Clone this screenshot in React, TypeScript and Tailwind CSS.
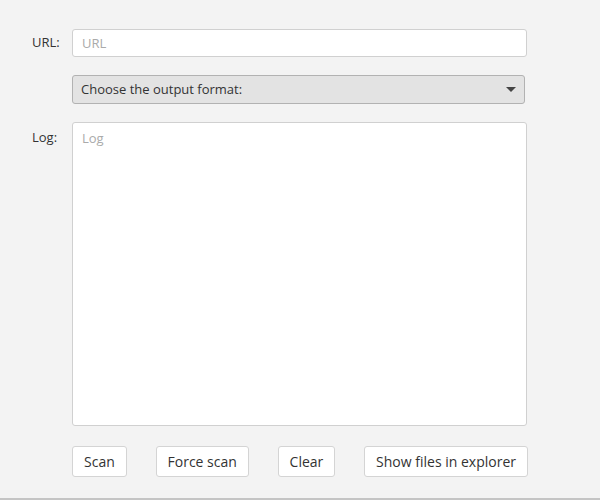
const font = { fontFamily: '"Open Sans", "Noto Sans", sans-serif' }

const buttons = ["Scan", "Force scan", "Clear", "Show files in explorer"]

export default function App() {
  return (
    <div className="w-[600px] h-[500px] bg-[#f3f3f3] text-[13px] text-[#333] border-b-2 border-[#c4c4c4]" style={font}>
      <div className="grid grid-cols-[40px_455px] pl-[32px] pt-[29px] gap-y-[18px]">
        <div className="flex items-center h-[28px]">URL:</div>
        <input
          placeholder="URL"
          className="h-[28px] bg-white border border-[#d0d0d0] rounded-[3px] px-[9px] outline-none placeholder:text-[#aaa]"
        />

        <div />
        <div className="w-[453px] h-[29px] bg-[#e3e3e3] border border-[#b2b2b2] rounded-[3px] flex items-center justify-between pl-[8px] pr-[8px]">
          <span>Choose the output format:</span>
          <svg width="10" height="5" viewBox="0 0 10 5">
            <path d="M0 0h10L5 5z" fill="#444" />
          </svg>
        </div>

        <div className="pt-[6px]">Log:</div>
        <textarea
          placeholder="Log"
          className="h-[304px] bg-white border border-[#d0d0d0] rounded-[3px] px-[9px] py-[6px] resize-none outline-none placeholder:text-[#aaa]"
        />

        <div />
        <div className="flex justify-between w-[456px] mt-[2px]">
          {buttons.map((b) => (
            <button key={b} className="h-[31px] px-[11px] text-[14px] bg-white border border-[#d4d4d4] rounded-[3px]">
              {b}
            </button>
          ))}
        </div>
      </div>
    </div>
  )
}
